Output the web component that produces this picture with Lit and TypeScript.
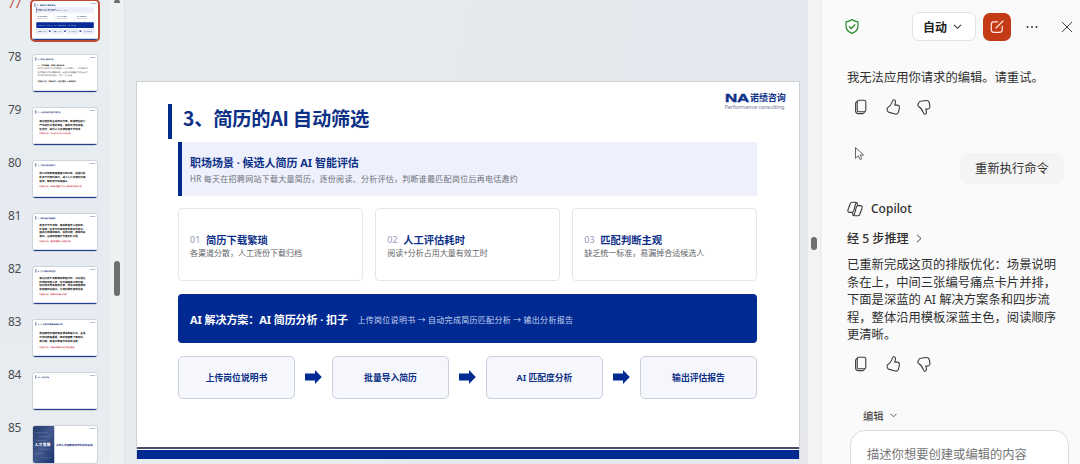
import { LitElement, html, css, svg, nothing } from "lit";
import { customElement, property } from "lit/decorators.js";

interface Thumb {
  n: number;
  title: string;
  lines?: string[];
  top?: number;
  step?: number;
  note?: string;
  noteY?: number;
  light?: boolean;
  kind?: "cards" | "cover";
}

const thumbs: Thumb[] = [
  { n: 77, title: "3、简历的AI 自动筛选", kind: "cards" },
  {
    n: 78, title: "4、候选人面试分析", light: true, top: 118, step: 32,
    lines: ["一、应用场景：候选人面试分析", "面试官在面试过程中记录候选人的回答情况，人工整理耗时", "利用智能体对面试录音转写，自动提取关键能力项生成结果", "同步输出面试评估报告，供用人部门参考"],
    note: "智能体分析：录音转写 → 能力提取 → 面试报告", noteY: 276,
  },
  { n: 79, title: "5、培训方案的智能生成优化", top: 150, step: 40, lines: ["通过智能体生成培训方案，根据岗位能力", "产出有针对性的课程，并结合培训评估，", "化迭代，提升人力资源管理工作效率"], note: "智能体分析：员工能力分析与培训方案", noteY: 274 },
  { n: 80, title: "6、智能入职问答助手", top: 138, step: 39, lines: ["将公司规章制度整理为知识库，搭建问答", "新员工可随时提问，减少人力资源的沟通", "成本，帮助员工快速融入"], note: "智能体分析：知识库搭建与员工入职问答的智能应答", noteY: 274 },
  { n: 81, title: "7、绩效考核智能辅助", top: 124, step: 38, lines: ["将员工工作目标、绩效数据导入智能体，", "形成每一位员工的绩效报告并给出建议，", "据此开展绩效面谈，发现问题，跟踪改进", "落实，让绩效管理工作更有针对性"], note: "智能体分析：绩效数据导入与报告生成", noteY: 294 },
  { n: 82, title: "8、员工离职风险预测", top: 124, step: 38, lines: ["通过对员工考勤绩效数据分析，识别潜在", "的离职风险人员，及时提醒并开展沟通，", "同时结合离职面谈记录，归纳出共性原因", "成管理改进建议，为组织稳定提供支持"], note: "智能体分析：离职风险识别与改进", noteY: 294 },
  { n: 83, title: "9、人力资源数据看板自动生成", top: 142, step: 42, lines: ["将招聘培训绩效等各模块数据汇总，生成", "可视化数据看板，帮助管理者了解现状，", "常问题，并基于数据作出有效决策"], note: "智能体分析：多模块数据汇总与可视化看板", noteY: 288 },
  { n: 84, title: "10、综合演练" },
  { n: 85, title: "人才发展", kind: "cover" },
];

@customElement("slide-thumb")
class SlideThumb extends LitElement {
  @property({ attribute: false }) data!: Thumb;
  @property({ type: Boolean }) selected = false;

  static styles = css`
    :host { display: flex; height: 53px; box-sizing: border-box; }
    .num { width: 32px; box-sizing: border-box; padding-left: 8px; font: 12px/16px "Noto Sans", sans-serif; letter-spacing: -0.4px; color: #4b4d50; margin-top: -5px; }
    .frame { box-sizing: border-box; width: 66px; height: 39px; border: 1px solid #cdd4db; border-radius: 3px; background: #fff; overflow: hidden; }
    .frame svg { display: block; width: 64px; height: 37px; }
    :host([selected]) .num { color: #c4452e; }
    :host([selected]) .frame { margin: -2px; width: 70px; height: 43px; border: 2px solid #bc4a35; border-radius: 5px; }
    :host([selected]) svg { width: 66px; height: 39px; }
    text { font-family: "Noto Sans CJK SC", sans-serif; text-rendering: geometricPrecision; }
  `;

  private cards() {
    const steps = ["上传岗位说明书", "批量导入简历", "AI 匹配度分析", "输出评估报告"];
    const cards = ["01 简历下载繁琐", "02 人工评估耗时", "03 匹配判断主观"];
    return svg`
      <rect x="43" y="61" width="578" height="54" fill="#eceffa"/>
      <rect x="43" y="61" width="5" height="54" fill="#0a2f8c"/>
      <text x="56" y="84" font-size="12" font-weight="700" fill="#1b3a8c">职场场景 · 候选人简历 AI 智能评估</text>
      <text x="56" y="102" font-size="12" fill="#666">HR 每天在招聘网站下载大量简历，逐份阅读、分析评估</text>
      ${cards.map((t, i) => svg`
        <rect x=${43 + i * 197} y="127" width="184" height="73" rx="6" fill="#fff" stroke="#e0e3ee" stroke-width="3"/>
        <text x=${56 + i * 197} y="162" font-size="13" font-weight="700" fill="#33497e">${t}</text>
        <text x=${56 + i * 197} y="180" font-size="13" fill="#666">人工逐份下载归档</text>`)}
      <rect x="43" y="208" width="578" height="56" rx="6" fill="#062b96"/>
      <text x="56" y="241" font-size="13" font-weight="700" fill="#8fa2de">AI 解决方案：AI 简历分析 · 扣子 上传岗位说明书 → 输出分析报告</text>
      ${steps.map((t, i) => svg`
        <rect x=${43 + i * 154} y="275" width="117" height="42" rx="8" fill="#f0f3fb" stroke="#b9c5e6" stroke-width="4"/>
        <text x=${101 + i * 154} y="301" text-anchor="middle" font-size="13" fill="#1b3a8c">${t}</text>
        ${i < 3 ? svg`<rect x=${170 + i * 154} y="289" width="16" height="14" fill="#0a2f8c"/>` : nothing}`)}`;
  }

  private cover(d: Thumb) {
    return svg`
      <defs><linearGradient id="g" x2="1" y2="1"><stop offset="0" stop-color="#263a6b"/><stop offset=".5" stop-color="#43588c"/><stop offset="1" stop-color="#18316f"/></linearGradient></defs>
      <rect width="220" height="383" fill="url(#g)"/>
      <path d="M20 70h130M60 110h120M30 150h90M70 240h110M20 285h90M80 330h110" stroke="#6c7fab" stroke-width="10" opacity=".55"/>
      <text x="16" y="205" font-size="41" font-weight="700" fill="#fff">${d.title}</text>
      <text x="240" y="204" font-size="27" font-weight="700" fill="#1b2f80">AI与人才招聘和培养的综合运用</text>`;
  }

  render() {
    const d = this.data;
    const top = d.top ?? 0;
    const step = d.step ?? 0;
    return html`
      <div class="num">${d.n}</div>
      <div class="frame">
        <svg viewBox="0 0 663 383" preserveAspectRatio="none">
          ${d.kind === "cover" ? this.cover(d) : svg`
            <rect x="26" y="22" width="7" height="36" fill="#14307e"/>
            <text x="48" y="48" font-size="19" font-weight="700" fill="#14307e">${d.title}</text>
            ${d.kind === "cards" ? this.cards() : nothing}
            ${(d.lines ?? []).map((l, i) => svg`<text x=${d.light ? 46 : 66} y=${top + i * step} font-size=${d.light ? 20 : 26.5}
              font-weight=${d.light && i ? 400 : 700} fill=${d.light && i ? "#555" : "#111"}>${l}</text>`)}
            ${d.note ? svg`<text x=${d.light ? 46 : 66} y=${d.noteY!} font-size="19" font-weight="700" fill=${d.light ? "#222" : "#cf3347"}>${d.note}</text>` : nothing}
            <rect y="371" width="663" height="12" fill="#223f8f"/>`}
          <text x="586" y="30" font-size="11" font-weight="700" fill="#33508f">NA诺绩咨询</text>
        </svg>
      </div>`;
  }
}

@customElement("main-slide")
class MainSlide extends LitElement {
  static styles = css`
    :host { display: flex; flex-direction: column; box-sizing: border-box; width: 664px; height: 378px; border: 1px solid #ccd3d6; border-bottom: 0; background: #fff; font-family: "Noto Sans", "Noto Sans CJK SC", sans-serif; color: #0d3087; white-space: nowrap; }
    .head { display: flex; height: 60px; box-sizing: border-box; padding: 10px 13px 0 31.5px; }
    .bar { width: 4px; height: 35px; margin-top: 12px; background: #002c90; }
    .title { margin: 11px 0 0 11px; font: 700 19.3px/30px "Noto Sans CJK SC", sans-serif; letter-spacing: -0.22px; flex: 1; }
    .logo { width: 61px; display: flex; flex-direction: column; }
    .brand { display: flex; align-items: center; height: 12px; }
    .na { width: 26px; font: 700 11.5px/12px "Liberation Sans", sans-serif; }
    .na span { display: inline-block; transform: scaleX(1.47); transform-origin: 0 50%; letter-spacing: -0.2px; -webkit-text-stroke: 0.4px #12358f; }
    .cn { font-size: 9px; line-height: 12px; font-weight: 700; letter-spacing: -0.15px; }
    .en { font: 5.6px/8px "Noto Sans", sans-serif; color: #74799a; letter-spacing: -0.15px; margin-top: -1px; }
    .body { width: 579px; margin-left: 41.5px; display: flex; flex-direction: column; flex: 1; }
    .scene { height: 54px; box-sizing: border-box; background: #eef0fb; border-left: 4px solid #002a8c; padding: 13px 0 0 8px; }
    .scene-title { font-size: 11px; line-height: 16px; font-weight: 700; letter-spacing: -0.03px; }
    .sub { font-size: 8px; line-height: 15px; color: #6c7079; letter-spacing: 0.27px; }
    .cards { display: grid; grid-template-columns: repeat(3, 1fr); gap: 12.5px; margin-top: 12px; }
    .card { height: 73px; box-sizing: border-box; border: 1px solid #e4e6ea; border-radius: 4px; padding: 22px 0 0 11px; }
    .row { display: flex; align-items: center; gap: 5px; height: 16px; }
    .no { font-size: 9px; color: #939ab5; width: 11px; letter-spacing: 0.1px; }
    .ct { font-size: 10.3px; font-weight: 700; }
    .card .sub { line-height: 12px; letter-spacing: 0; color: #62656b; }
    .solution { display: flex; align-items: center; gap: 9.5px; height: 49px; box-sizing: border-box; margin-top: 13px; background: #002a91; border-radius: 4px; padding: 0 0 0 12px; color: #fff; }
    .sol { font-size: 11px; font-weight: 700; letter-spacing: -0.07px; }
    .solsub { font-family: "Noto Sans CJK SC", sans-serif; font-size: 8px; color: #c8d3f3; letter-spacing: 0.3px; padding-top: 1px; }
    .steps { display: flex; align-items: center; justify-content: space-between; margin-top: 13px; }
    .step { width: 117px; height: 42.5px; box-sizing: border-box; border: 1px solid #cbd0df; border-radius: 5px; background: #f5f7fc; display: flex; align-items: center; justify-content: center; font-size: 8.8px; font-weight: 700; }
    .arrow { width: 17px; height: 14px; display: block; }
    .foot { border-top: 2px solid #484b70; height: 12px; box-sizing: border-box; padding-top: 1px; }
    .band { height: 9px; background: #002a91; }
  `;

  render() {
    const cards = [
      ["01", "简历下载繁琐", "各渠道分散，人工逐份下载归档"],
      ["02", "人工评估耗时", "阅读+分析占用大量有效工时"],
      ["03", "匹配判断主观", "缺乏统一标准，易漏掉合适候选人"],
    ];
    const steps = ["上传岗位说明书", "批量导入简历", "AI 匹配度分析", "输出评估报告"];
    return html`
      <div class="head">
        <div class="bar"></div>
        <div class="title">3、简历的AI 自动筛选</div>
        <div class="logo">
          <div class="brand"><div class="na"><span>NA</span></div><div class="cn">诺绩咨询</div></div>
          <div class="en">Performance consulting</div>
        </div>
      </div>
      <div class="body">
        <div class="scene">
          <div class="scene-title">职场场景 · 候选人简历 AI 智能评估</div>
          <div class="sub">HR 每天在招聘网站下载大量简历，逐份阅读、分析评估，判断谁最匹配岗位后再电话邀约</div>
        </div>
        <div class="cards">
          ${cards.map(([no, t, s]) => html`<div class="card"><div class="row"><span class="no">${no}</span><span class="ct">${t}</span></div><div class="sub">${s}</div></div>`)}
        </div>
        <div class="solution">
          <div class="sol">AI 解决方案：AI 简历分析 · 扣子</div>
          <div class="solsub">上传岗位说明书 → 自动完成简历匹配分析 → 输出分析报告</div>
        </div>
        <div class="steps">
          ${steps.map((s, i) => html`
            ${i ? html`<svg class="arrow" viewBox="0 0 17 14"><path d="M0 3.4h10V0l6.8 7L10 14v-3.4H0z" fill="#002a91"/></svg>` : nothing}
            <div class="step">${s}</div>`)}
        </div>
      </div>
      <div class="foot"><div class="band"></div></div>`;
  }
}

@customElement("feedback-row")
class FeedbackRow extends LitElement {
  static styles = css`
    :host { display: flex; gap: 13.5px; padding-left: 5px; height: 18px; }
    svg { width: 18px; height: 18px; fill: none; stroke: #3c3c3c; stroke-width: 1.1; stroke-linejoin: round; stroke-linecap: round; }
  `;
  render() {
    return html`
      <svg viewBox="0 0 18 18"><rect x="5.2" y="2.2" width="8.6" height="11.6" rx="1.8"/><path d="M5 3.6Q3.6 4 3.6 5.6v7.2q0 2.8 2.8 2.8h4.2q1.3 0 1.8-1.2"/></svg>
      <svg viewBox="0 0 18 18"><path d="M9.6 1.8c.9-.2 1.9.6 1.9 1.8 0 1.1-.3 2.3-.8 3.5h2.4c1.6 0 2.6 1.3 2.3 2.8l-.9 4c-.4 1.7-1.7 2.5-3.3 2.1l-6-1.6c-.9-.2-1.5-.8-1.7-1.6l-.4-1.3c-.2-.8.1-1.6.8-2 2.8-1.5 3.6-3.5 4.7-6.6.2-.7.5-1 1-1.1z"/></svg>
      <svg viewBox="0 0 18 18"><path d="M9.7 16.2c1 .1 1.7-.7 1.7-1.9 0-1-.2-2.1-.6-3.2h1.5c1.7 0 2.8-1.3 2.6-2.9l-.5-3.1c-.3-1.7-1.6-2.8-3.3-2.6l-5.3.8c-.9.1-1.6.6-2 1.4L3 6.2c-.5.9-.2 1.7.6 2.2 2.7 1.5 3.7 3.3 4.9 6.5.3.8.6 1.2 1.2 1.3z"/></svg>`;
  }
}

@customElement("copilot-pane")
class CopilotPane extends LitElement {
  static styles = css`
    :host { display: flex; flex-direction: column; box-sizing: border-box; width: 258px; height: 464px; padding: 12px 0 0 25px; background: #fafafa; font-family: "Noto Sans", "Noto Sans CJK SC", sans-serif; color: #303030; font-size: 12.3px; white-space: nowrap; overflow: hidden; }
    svg { display: block; fill: none; flex: none; }
    .top { display: flex; align-items: center; height: 29px; }
    .shield { width: 16px; height: 17px; margin-left: -3px; }
    .auto { margin-left: 52px; width: 64px; height: 29px; box-sizing: border-box; border: 1px solid #e3e3e3; border-radius: 7px; background: #fff; display: flex; align-items: center; padding-left: 10px; gap: 6px; font-weight: 700; font-size: 12px; color: #222; }
    .auto svg { width: 9px; height: 9px; }
    .edit { width: 28px; height: 28px; border-radius: 7px; background: #c43a17; margin-left: 7px; }
    .dots { width: 12px; height: 4px; margin-left: 15px; }
    .close { width: 12px; height: 12px; margin-left: 23px; }
    .msg { margin-top: 27px; line-height: 20px; height: 20px; }
    .fb { margin-top: 10px; }
    .fb2 { margin-top: 11px; }
    .userrow { display: flex; justify-content: space-between; margin-top: 30px; height: 45px; }
    .cursor { width: 11px; height: 15px; margin-left: 7px; }
    .bubble { width: 104px; height: 31px; box-sizing: border-box; margin: 7px 16px 0 0; border-radius: 8px; background: #f4f4f4; text-align: center; line-height: 32px; }
    .name { display: flex; align-items: center; gap: 8px; height: 18px; margin-top: 16px; font-weight: 500; font-size: 12px; }
    .name svg { width: 16px; height: 16px; }
    .reason { display: flex; align-items: center; gap: 7px; height: 18px; margin-top: 12px; font-size: 12.1px; font-weight: 500; }
    .reason svg { width: 6px; height: 9px; }
    .answer { margin-top: 9px; font-size: 12.3px; line-height: 17.6px; height: 90px; }
    .mode { display: flex; align-items: center; gap: 6px; margin: 35px 0 0 16px; height: 18px; font-size: 10.3px; }
    .mode svg { width: 7px; height: 5px; }
    .input { margin: 7px 0 0 3px; width: 219px; height: 60px; flex: none; box-sizing: border-box; border: 1px solid #dcdcdc; border-radius: 15px; background: #fff; color: #757575; padding: 14px 0 0 16px; line-height: 19px; }
  `;

  render() {
    const lines = ["已重新完成这页的排版优化：场景说明", "条在上，中间三张编号痛点卡片并排，", "下面是深蓝的 AI 解决方案条和四步流", "程，整体沿用模板深蓝主色，阅读顺序", "更清晰。"];
    return html`
      <div class="top">
        <svg class="shield" viewBox="0 0 16 17"><path d="M8 1.5c1.7 1.4 3.6 2.2 6 2.4v4.4c0 3.3-2.2 5.7-6 7.1-3.8-1.4-6-3.8-6-7.1V3.9c2.4-.2 4.3-1 6-2.4z" stroke="#25882b" stroke-width="1.2" stroke-linejoin="round"/><path d="M5 8.3l2.2 2.2 4-4" stroke="#25882b" stroke-width="1.3"/></svg>
        <div class="auto">自动<svg viewBox="0 0 9 9"><path d="M1 2.8l3.5 3.5L8 2.8" stroke="#333" stroke-width="1.1"/></svg></div>
        <svg class="edit" viewBox="0 0 28 28"><path d="M14.5 8.8h-3.7q-2.5 0-2.5 2.5v5.5q0 2.5 2.5 2.5h5.900q2.500 0 2.500-2.500v-3.600M13 15l7-7" stroke="#ffe9e2" stroke-width="1.2" stroke-linecap="round"/></svg>
        <svg class="dots" viewBox="0 0 12 4"><g fill="#333"><circle cx="1.5" cy="2" r="1"/><circle cx="6" cy="2" r="1"/><circle cx="10.5" cy="2" r="1"/></g></svg>
        <svg class="close" viewBox="0 0 12 12"><path d="M1 1l10 10M11 1L1 11" stroke="#444" stroke-width="1"/></svg>
      </div>
      <div class="msg">我无法应用你请求的编辑。请重试。</div>
      <feedback-row class="fb"></feedback-row>
      <div class="userrow">
        <svg class="cursor" viewBox="0 0 11 15"><path d="M1.5 1.5v10.8l2.7-2.5 1.9 3.7 1.7-.8-1.7-3.6h3.5z" fill="#fff" stroke="#555" stroke-width=".9" stroke-linejoin="round"/></svg>
        <div class="bubble">重新执行命令</div>
      </div>
      <div class="name">
        <svg viewBox="0 0 16 16" stroke="#3a3a3a" stroke-width="1.1" stroke-linejoin="round"><path d="M10.8 4.600l-.6-2q-.4-1.400-1.900-1.400H5.300q-1.600 0-2.100 1.500L1 8.800q-.7 2.600 1.700 2.600h2.100q1.400 0 1.800-1.300l2-7.200q.3-1.500 1.700-1.500"/><path d="M5.200 11.400l.6 2q.4 1.400 1.900 1.400h3q1.600 0 2.100-1.500L15 7.200q.7-2.600-1.700-2.600h-2.100q-1.400 0-1.800 1.300l-2 7.200q-.3 1.500-1.700 1.500"/></svg>
        <span>Copilot</span>
      </div>
      <div class="reason">经 5 步推理<svg viewBox="0 0 6 9"><path d="M1 .8l4 3.7-4 3.7" stroke="#444" stroke-width="1"/></svg></div>
      <div class="answer">${lines.map((l) => html`<div>${l}</div>`)}</div>
      <feedback-row class="fb2"></feedback-row>
      <div class="mode">编辑<svg viewBox="0 0 7 5"><path d="M.5 .8l3 3 3-3" stroke="#444" stroke-width=".9"/></svg></div>
      <div class="input">描述你想要创建或编辑的内容</div>`;
  }
}

@customElement("app-root")
class AppRoot extends LitElement {
  static styles = css`
    :host { display: flex; width: 1080px; height: 464px; overflow: hidden; background: #e7ebef; }
    .rail { width: 110px; height: 464px; overflow: hidden; background: linear-gradient(#e8eef0, #e6ebf1 50%, #e9edf1); }
    .list { margin-top: 1px; }
    .scroll { width: 15px; height: 464px; box-sizing: border-box; background: linear-gradient(90deg, #eef1f2, #f0f2f2); border-right: 1px solid #dde1e4; display: flex; flex-direction: column; align-items: center; }
    .up { width: 7px; height: 3px; background: #6d6f70; clip-path: polygon(20% 0, 80% 0, 100% 100%, 0 100%); }
    .thumb { width: 6px; height: 35px; margin-top: 258px; border-radius: 3px; background: #6d6f70; }
    .stage { width: 683px; box-sizing: border-box; padding: 81px 0 0 10.5px; background: linear-gradient(100deg, #e7edee, #e5e9ee 60%, #e5e7ed); }
    .scroll2 { width: 14px; box-sizing: border-box; background: #f3f3f4; border-right: 2px solid #eeeeef; padding: 237px 0 0 3px; }
    .pill { width: 6px; height: 13px; border-radius: 3px; background: #6d6e6e; }
  `;
  render() {
    return html`
      <div class="rail"><div class="list">${thumbs.map((t) => html`<slide-thumb .data=${t} ?selected=${t.n === 77}></slide-thumb>`)}</div></div>
      <div class="scroll"><div class="up"></div><div class="thumb"></div></div>
      <div class="stage"><main-slide></main-slide></div>
      <div class="scroll2"><div class="pill"></div></div>
      <copilot-pane></copilot-pane>`;
  }
}
